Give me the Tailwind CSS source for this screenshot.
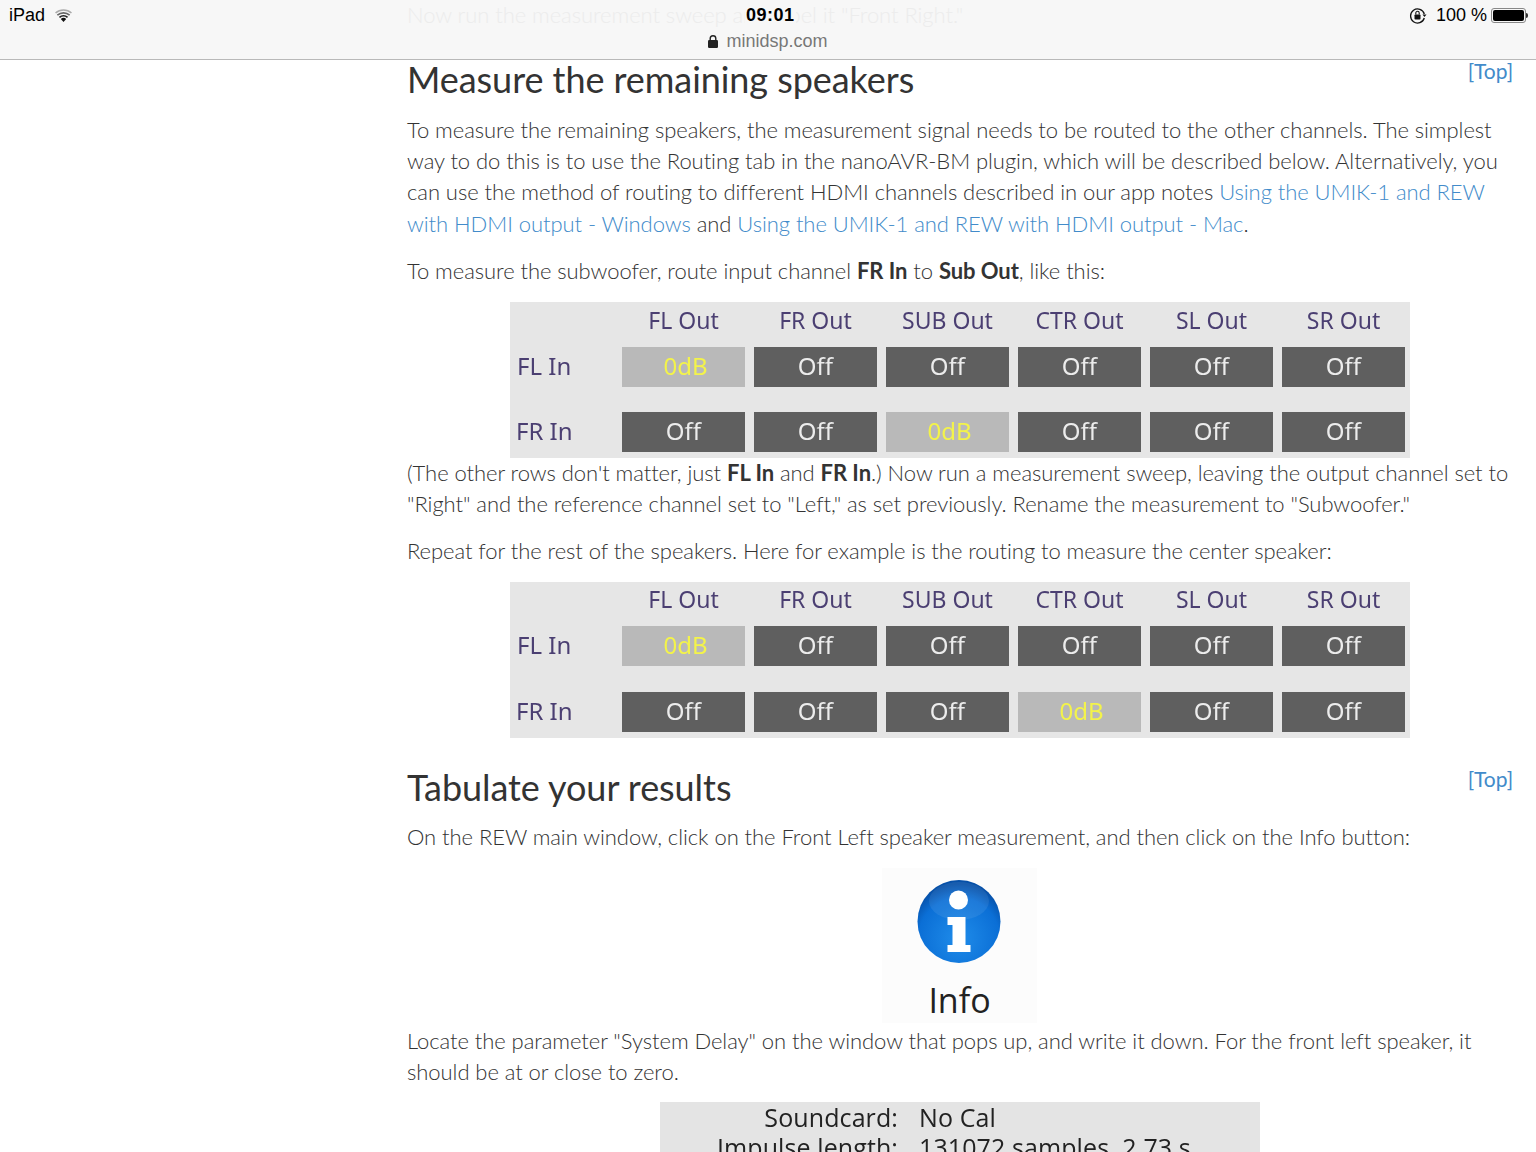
<!DOCTYPE html>
<html>
<head>
    <meta charset="utf-8">
    <title>minidsp.com</title>
    <script src="https://cdn.jsdelivr.net/npm/@tailwindcss/browser@4"></script>
</head>
<body class="relative w-[1536px] h-[1152px] overflow-hidden bg-white font-['Lato',sans-serif] font-light text-[#333]">

    <!-- Safari chrome -->
    <div class="absolute top-0 left-0 w-full h-[60px] bg-[#f7f7f7] border-b border-[#b9b9b9] font-['Liberation_Sans',sans-serif] font-normal text-black z-10">
        <div class="h-[31px] flex items-center justify-between pl-[9px] pr-[8px] text-[18px]">
            <div class="flex items-center gap-[10px]">
                <span>iPad</span>
                <svg width="17" height="13" viewBox="0 0 17 13"><path d="M8.5 13 5.8 9.9a4 4 0 0 1 5.4 0z" fill="#111"/><path d="M3.9 7.8a7 7 0 0 1 9.2 0L12 9a5.4 5.4 0 0 0-7 0z" fill="#222"/><path d="M1.8 5.5a10.200 10.200 0 0 1 13.400 0L14.100 6.800a8.500 8.500 0 0 0-11.200 0z" fill="#666"/><path d="M0 3.400a13 13 0 0 1 17 0L15.900 4.600a11.300 11.300 0 0 0-14.800 0z" fill="#aaa"/></svg>
            </div>
            <div class="flex items-center">
                <svg width="18" height="18" viewBox="0 0 18 18" class="mr-[9px]"><path d="M15.300 7A7 7 0 1 0 15.300 11" fill="none" stroke="#111" stroke-width="1.300"/><path d="M13.500 7.500h4L15.500 10z" fill="#111"/><rect x="5.500" y="7.500" width="6" height="5" rx="0.800" fill="#111"/><path d="M6.800 7.500V6a1.700 1.700 0 0 1 3.400 0v1.500" fill="none" stroke="#111" stroke-width="1.100"/></svg>
                <span class="mr-[4px]">100 %</span>
                <div class="w-[35px] h-[15px] p-[1px] border border-[#888] rounded-[3px]"><div class="w-full h-full bg-black rounded-[2px]"></div></div>
                <div class="w-[2px] h-[5px] bg-[#333] rounded-r-[2px]"></div>
            </div>
        </div>
        <div class="h-[21px] flex items-center justify-center gap-[8px] text-[18px] text-[#777]">
            <svg width="10" height="13" viewBox="0 0 10 13"><rect x="0" y="5" width="10" height="8" rx="1.200" fill="#222"/><path d="M2.200 5.500V3.500a2.800 2.800 0 0 1 5.600 0v2" fill="none" stroke="#222" stroke-width="1.400"/></svg>
            <span>minidsp.com</span>
        </div>
        <!-- page text scrolled under the translucent bar -->
        <p class="absolute left-[407px] top-0 leading-[30px] text-[22px] tracking-[-0.060px] font-['Lato',sans-serif] font-light text-[#ececec] whitespace-nowrap">Now run the measurement sweep and label it "Front Right."</p>
        <span class="absolute left-[745px] top-[5px] px-[1px] bg-[#f7f7f7] text-[18px] leading-[21px] font-bold tracking-[0.5px] text-black">09:01</span>
    </div>

    <main class="pt-[60px] pl-[407px] pr-[23px] text-[22px] leading-[31.400px] tracking-[-0.060px]">
        <div class="flex justify-between items-start">
            <h2 class="text-[36px] leading-[38px] font-normal">Measure the remaining speakers</h2>
            <a class="text-[21px] leading-[22px] font-normal text-[#428bca]">[Top]</a>
        </div>

        <p class="mt-[15.500px]">To measure the remaining speakers, the measurement signal needs to be routed to the other channels. The simplest way to do this is to use the Routing tab in the nanoAVR-BM plugin, which will be described below. Alternatively, you can use the method of routing to different HDMI channels described in our app notes <a class="text-[#428bca]">Using the UMIK-1 and REW with HDMI output - Windows</a> and <a class="text-[#428bca]">Using the UMIK-1 and REW with HDMI output - Mac</a>.</p>
        <p class="mt-[15.500px]">To measure the subwoofer, route input channel <b class="font-bold">FR In</b> to <b class="font-bold">Sub Out</b>, like this:</p>

        <div class="mt-[16px] ml-[103px] w-[900px] h-[156px] bg-[#e6e6e6] pl-[6px] font-['Noto_Sans',sans-serif] font-normal text-[24px] leading-[38px] tracking-normal text-[#4b3f72] grid grid-cols-[97px_repeat(6,123px)] gap-x-[9px] grid-rows-[45px_40px_25px_40px] content-start blur-[0.4px]">
            <div></div>
            <div class="text-[23px] leading-[36px] text-center">FL Out</div><div class="text-[23px] leading-[36px] text-center">FR Out</div><div class="text-[23px] leading-[36px] text-center">SUB Out</div><div class="text-[23px] leading-[36px] text-center">CTR Out</div><div class="text-[23px] leading-[36px] text-center">SL Out</div><div class="text-[23px] leading-[36px] text-center">SR Out</div>
            <div class="pl-[1px]">FL In</div>
            <div class="bg-[#b9b9b9] text-[#f3f34a] text-center pl-[4px]">0dB</div><div class="bg-[#5f5f5f] text-[#ececec] text-center">Off</div><div class="bg-[#5f5f5f] text-[#ececec] text-center">Off</div><div class="bg-[#5f5f5f] text-[#ececec] text-center">Off</div><div class="bg-[#5f5f5f] text-[#ececec] text-center">Off</div><div class="bg-[#5f5f5f] text-[#ececec] text-center">Off</div>
            <div class="col-span-7"></div>
            <div>FR In</div>
            <div class="bg-[#5f5f5f] text-[#ececec] text-center">Off</div><div class="bg-[#5f5f5f] text-[#ececec] text-center">Off</div><div class="bg-[#b9b9b9] text-[#f3f34a] text-center pl-[4px]">0dB</div><div class="bg-[#5f5f5f] text-[#ececec] text-center">Off</div><div class="bg-[#5f5f5f] text-[#ececec] text-center">Off</div><div class="bg-[#5f5f5f] text-[#ececec] text-center">Off</div>
        </div>

        <p class="-mt-[1px]">(The other rows don't matter, just <b class="font-bold">FL In</b> and <b class="font-bold">FR In</b>.) Now run a measurement sweep, leaving the output channel set to "Right" and the reference channel set to "Left," as set previously. Rename the measurement to "Subwoofer."</p>
        <p class="mt-[15.500px]">Repeat for the rest of the speakers. Here for example is the routing to measure the center speaker:</p>

        <div class="mt-[15px] ml-[103px] w-[900px] h-[156px] bg-[#e6e6e6] pl-[6px] font-['Noto_Sans',sans-serif] font-normal text-[24px] leading-[38px] tracking-normal text-[#4b3f72] grid grid-cols-[97px_repeat(6,123px)] gap-x-[9px] grid-rows-[44px_40px_26px_40px] content-start blur-[0.4px]">
            <div></div>
            <div class="text-[23px] leading-[34px] text-center">FL Out</div><div class="text-[23px] leading-[34px] text-center">FR Out</div><div class="text-[23px] leading-[34px] text-center">SUB Out</div><div class="text-[23px] leading-[34px] text-center">CTR Out</div><div class="text-[23px] leading-[34px] text-center">SL Out</div><div class="text-[23px] leading-[34px] text-center">SR Out</div>
            <div class="pl-[1px]">FL In</div>
            <div class="bg-[#b9b9b9] text-[#f3f34a] text-center pl-[4px]">0dB</div><div class="bg-[#5f5f5f] text-[#ececec] text-center">Off</div><div class="bg-[#5f5f5f] text-[#ececec] text-center">Off</div><div class="bg-[#5f5f5f] text-[#ececec] text-center">Off</div><div class="bg-[#5f5f5f] text-[#ececec] text-center">Off</div><div class="bg-[#5f5f5f] text-[#ececec] text-center">Off</div>
            <div class="col-span-7"></div>
            <div>FR In</div>
            <div class="bg-[#5f5f5f] text-[#ececec] text-center">Off</div><div class="bg-[#5f5f5f] text-[#ececec] text-center">Off</div><div class="bg-[#5f5f5f] text-[#ececec] text-center">Off</div><div class="bg-[#b9b9b9] text-[#f3f34a] text-center pl-[4px]">0dB</div><div class="bg-[#5f5f5f] text-[#ececec] text-center">Off</div><div class="bg-[#5f5f5f] text-[#ececec] text-center">Off</div>
        </div>

        <div class="mt-[30px] flex justify-between items-start">
            <h2 class="text-[36px] leading-[38px] font-normal">Tabulate your results</h2>
            <a class="text-[21px] leading-[22px] font-normal text-[#428bca]">[Top]</a>
        </div>
        <p class="mt-[15.500px]">On the REW main window, click on the Front Left speaker measurement, and then click on the Info button:</p>

        <div class="mt-[15px] ml-[475px] w-[155px] h-[155px] bg-[#fcfcfc] flex flex-col items-center">
            <svg width="86" height="86" viewBox="0 0 86 86" class="mt-[11px] mr-[2px]">
                <defs>
                    <radialGradient id="ballBlue" cx="50%" cy="70%" r="65%">
                        <stop offset="0" stop-color="#1f8cea"/>
                        <stop offset="0.750" stop-color="#0b6fd6"/>
                        <stop offset="1" stop-color="#0650a8"/>
                    </radialGradient>
                </defs>
                <circle cx="43" cy="42.500" r="41.500" fill="url(#ballBlue)"/>
                <ellipse cx="43" cy="22" rx="30" ry="19" fill="#fff" fill-opacity="0.080"/>
                <circle cx="42.500" cy="21" r="9.500" fill="#fff"/>
                <path d="M31.500 38H49.500V66H54.500V73H31.500V66H36.500V46H31.500Z" fill="#fff"/>
            </svg>
            <span class="mt-[15px] text-[34px] leading-[40px] font-['Open_Sans',sans-serif] font-normal tracking-normal text-[#222]">Info</span>
        </div>

        <p class="mt-[2px]">Locate the parameter "System Delay" on the window that pops up, and write it down. For the front left speaker, it should be at or close to zero.</p>

        <div class="mt-[15px] ml-[253px] w-[600px] h-[60px] overflow-hidden bg-[#e4e4e4] grid grid-cols-[238px_1fr] gap-x-[21px] font-['Open_Sans',sans-serif] font-normal text-[25px] leading-[28px] tracking-[0.1px] text-[#222] pt-[1px] blur-[0.4px]">
            <div class="text-right">Soundcard:</div><div>No Cal</div>
            <div class="text-right">Impulse length:</div><div>131072 samples, 2.73 s</div>
        </div>
    </main>
</body>
</html>
